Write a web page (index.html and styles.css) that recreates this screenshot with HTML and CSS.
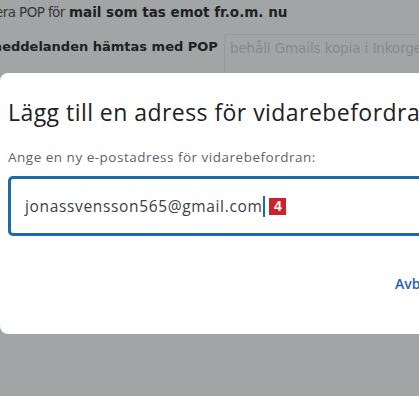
FILE: index.html
```html
<!DOCTYPE html>
<html lang="sv">
<head>
    <meta charset="UTF-8">
    <meta name="viewport" content="width=device-width, initial-scale=1.0">
    <title>Vidarebefordran</title>
    <link rel="stylesheet" href="styles.css">
</head>
<body>
    <div class="settings">
        <div class="settings-row first"><span class="lead">Aktivera POP för</span> <b>mail som tas emot fr.o.m. nu</b></div>
        <div class="settings-row second">
            <b>När meddelanden hämtas med POP</b>
            <div class="select-box">behåll Gmails kopia i Inkorgen</div>
        </div>
    </div>

    <div class="dialog">
        <h1>Lägg till en adress för vidarebefordran</h1>
        <p class="dialog-label">Ange en ny e-postadress för vidarebefordran:</p>
        <div class="input-box">
            <span class="input-text">jonassvensson565@gmail.com</span>
            <span class="caret"></span>
            <span class="step-badge">4</span>
        </div>
        <div class="dialog-actions">
            <span class="btn-link">Avbryt</span>
        </div>
    </div>
</body>
</html>
```

FILE: styles.css
```css
body {
    margin: 0;
    height: 396px;
    overflow: hidden;
    position: relative;
    background-color: #a2a5a6;
    font-family: "DejaVu Sans", Verdana, sans-serif;
    color: #262727;
}
.settings {
    padding-top: 3px;
    white-space: nowrap;
}
.settings-row {
    font-size: 13.5px;
    line-height: 18px;
    color: #353636;
}
.settings-row b {
    color: #202121;
}
.settings-row.first {
    margin-left: -36px;
}
.settings-row .lead {
    letter-spacing: -0.6px;
}
.settings-row.second {
    display: flex;
    align-items: flex-start;
    gap: 6px;
    margin-top: 17px;
    margin-left: -42px;
    font-size: 13px;
}
.select-box {
    margin-top: -4px;
    height: 40px;
    padding: 4px 5px 0;
    border: 1px solid #979a9b;
    color: #86898a;
    font-size: 13.5px;
    letter-spacing: -0.1px;
    font-weight: normal;
}
.dialog {
    position: absolute;
    top: 73px;
    left: 0;
    width: 460px;
    height: 261px;
    background-color: #fff;
    border-radius: 8px;
    padding: 0 0 0 8px;
    box-sizing: border-box;
    font-family: "Open Sans", Roboto, sans-serif;
    white-space: nowrap;
    overflow: hidden;
}
.dialog h1 {
    margin: 23px 0 0;
    font-size: 23px;
    line-height: 32px;
    font-weight: 400;
    letter-spacing: 0.45px;
    color: #202124;
}
.dialog-label {
    margin: 20px 0 0;
    font-size: 13.5px;
    line-height: 18px;
    letter-spacing: 0.5px;
    color: #5f6368;
}
.input-box {
    margin-top: 10px;
    height: 60px;
    box-sizing: border-box;
    border: 3px solid #1f6aa6;
    border-radius: 5px;
    display: flex;
    align-items: center;
    padding-left: 14px;
}
.input-text {
    font-size: 15.5px;
    letter-spacing: 0.65px;
    color: #3c4043;
}
.caret {
    width: 2px;
    height: 21px;
    margin-left: 1px;
    background-color: #1f6aa6;
}
.step-badge {
    margin-left: 4px;
    width: 17px;
    height: 17px;
    background-color: #cc2229;
    color: #fff;
    font-family: "Liberation Sans", Arial, sans-serif;
    font-weight: bold;
    font-size: 14px;
    line-height: 17px;
    text-align: center;
}
.dialog-actions {
    display: flex;
    margin-top: 38px;
    padding-left: 387px;
}
.btn-link {
    font-size: 14px;
    font-weight: 600;
    color: #2162b0;
}
```
